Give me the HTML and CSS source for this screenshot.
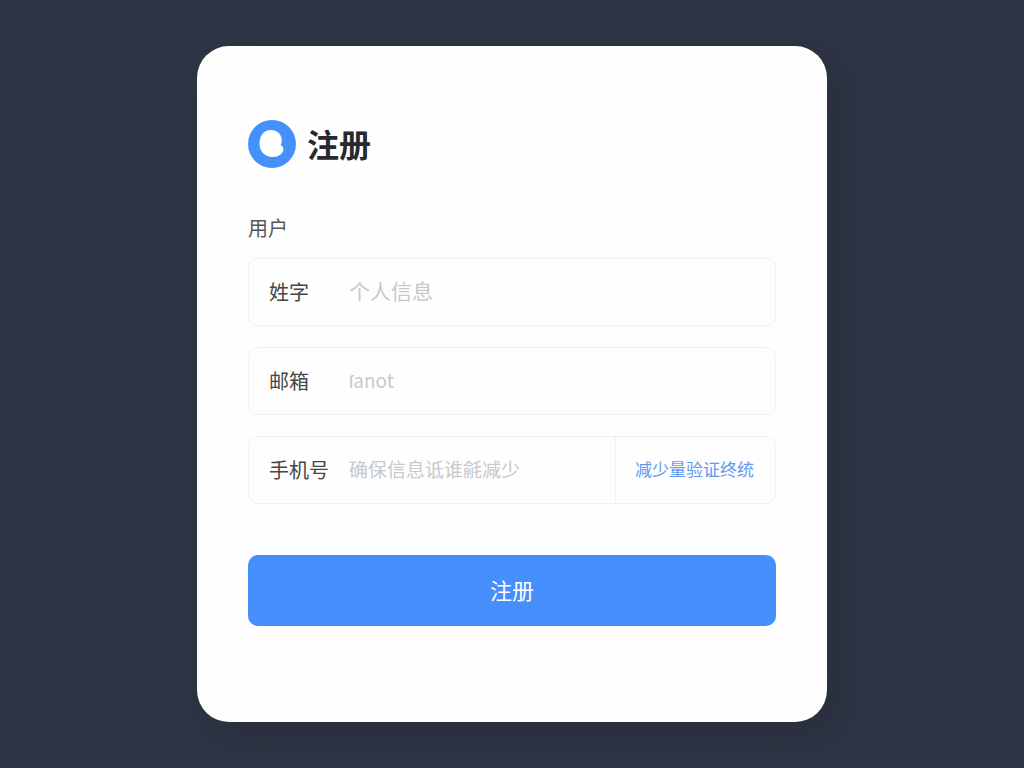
FILE: index.html
```html
<!DOCTYPE html>
<html lang="zh-CN">
<head>
<meta charset="utf-8">
<meta name="viewport" content="width=device-width, initial-scale=1">
<title>注册</title>
<link rel="stylesheet" href="styles.css">
</head>
<body>
<main class="card">
  <header class="brand">
    <svg class="logo" viewBox="0 0 48 48" aria-hidden="true">
      <circle cx="24" cy="24" r="24" fill="#4591fb"/>
      <path d="M23 10C15.500 10 11.500 16 11.500 23.500C11.500 31.500 17 37 24.500 37C30.500 37 35.400 33.500 35.400 29C35.400 27 34.300 26 32.600 25C33.600 23.500 34 21.800 33.600 19C32.800 13.500 29 10 23 10Z" fill="#fff"/>
    </svg>
    <h1 class="title">注册</h1>
  </header>
  <form class="form">
    <h2 class="section">用户</h2>
    <div class="fields">
      <div class="field">
        <label class="label" for="name">姓字</label>
        <input class="input input-large" id="name" type="text" placeholder="个人信息">
      </div>
      <div class="field">
        <label class="label" for="email">邮箱</label>
        <input class="input" id="email" type="text" placeholder="ſanot">
      </div>
      <div class="field">
        <label class="label" for="phone">手机号</label>
        <input class="input" id="phone" type="tel" placeholder="确保信息诋谁毹减少">
        <button class="code" type="button">减少量验证终统</button>
      </div>
    </div>
    <button class="submit" type="submit">注册</button>
  </form>
</main>
</body>
</html>
```
FILE: styles.css
```css
* {
  box-sizing: border-box;
}

body {
  margin: 0;
  min-height: 100vh;
  display: flex;
  align-items: center;
  justify-content: center;
  background: #2e3545;
  font-family: "Noto Sans CJK SC", sans-serif;
  color: #444648;
}

.card {
  width: 100%;
  max-width: 630px;
  padding: 74px 51px 96px;
  border-radius: 32px;
  background: #fefefe;
  box-shadow: 12px 12px 40px rgba(32, 34, 42, 0.4);
}

.brand {
  display: flex;
  align-items: center;
  gap: 11px;
}

.logo {
  width: 48px;
  height: 48px;
}

.title {
  margin: 0;
  padding-bottom: 2px;
  font-size: 32px;
  line-height: 46px;
  font-weight: 700;
  color: #27292c;
}

.section {
  margin: 45px 0 15px;
  font-size: 20px;
  line-height: 30px;
  font-weight: 400;
  color: #55585b;
}

.fields {
  display: grid;
  gap: 21px;
}

.field {
  display: flex;
  align-items: stretch;
  height: 68px;
  padding-left: 20px;
  border: 1px solid #f1f1f2;
  border-radius: 10px;
}

.label {
  flex: 0 0 80px;
  font-size: 20px;
  line-height: 66px;
}

.input {
  flex: 1;
  min-width: 0;
  padding: 0 0 4px;
  border: 0;
  background: transparent;
  font: inherit;
  font-size: 19px;
}

.input-large {
  font-size: 21px;
}

.input::placeholder {
  color: #c8c9ca;
  opacity: 1;
}

.code {
  flex: 0 0 160px;
  padding: 0 2px 4px 0;
  border: 0;
  border-left: 1px solid #f1f1f2;
  background: transparent;
  font: inherit;
  font-size: 17px;
  color: #5b9bf0;
}

.submit {
  display: block;
  width: 100%;
  height: 71px;
  margin-top: 51px;
  padding: 0 0 4px;
  border: 0;
  border-radius: 10px;
  background: #458efc;
  font: inherit;
  font-size: 22px;
  color: #fff;
}
```
